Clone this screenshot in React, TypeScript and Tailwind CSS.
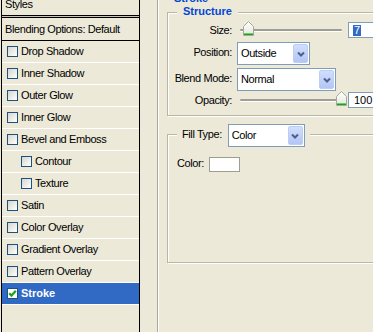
import React from "react";

function Check({ checked }: { checked?: boolean }) {
  return (
    <span
      className={
        checked
          ? "w-[11px] h-[11px] shrink-0 border border-[#1C5180] bg-white flex items-center justify-center"
          : "w-[11px] h-[11px] shrink-0 border border-[#1C5180] bg-linear-to-br from-[#D6D6CE] to-white"
      }
    >
      {checked && (
        <svg width="9" height="9" viewBox="0 0 9 9">
          <path d="M1.2 4.2 L3.5 6.6 L7.8 1.8" stroke="#21A121" strokeWidth="2.2" fill="none" />
        </svg>
      )}
    </span>
  );
}

function Thumb() {
  return (
    <svg width="11" height="15" viewBox="0 0 11 15">
      <defs>
        <linearGradient id="tg" x1="0" y1="0" x2="0" y2="1">
          <stop offset="0" stopColor="#FFFFFF" />
          <stop offset="1" stopColor="#E6E6DE" />
        </linearGradient>
      </defs>
      <path d="M0.5 5.5 L5.5 0.5 L10.5 5.5 V14.5 H0.5 Z" fill="url(#tg)" stroke="#A8A89C" />
      <path d="M1 12.5 H10" stroke="#5CD65C" />
      <path d="M1 13.5 H10" stroke="#21A121" />
    </svg>
  );
}

function Arrow() {
  return (
    <span className="w-[15px] h-[19px] shrink-0 rounded-[2px] border border-[#BCCDF6] bg-linear-to-b from-[#D2DEFD] to-[#B2C5F5] flex items-center justify-center">
      <svg width="8" height="6" viewBox="0 0 8 6">
        <path d="M1 1.5 L4 4.5 L7 1.5" stroke="#4D6185" strokeWidth="2" fill="none" />
      </svg>
    </span>
  );
}

function Select({ value, w }: { value: string; w: string }) {
  return (
    <div className={`${w} h-[23px] border border-[#7F9DB9] bg-white flex items-center pl-[3px] pr-[1px]`}>
      <span className="flex-1">{value}</span>
      <Arrow />
    </div>
  );
}

const items: { label: string; indent?: boolean; checked?: boolean }[] = [
  { label: "Drop Shadow" },
  { label: "Inner Shadow" },
  { label: "Outer Glow" },
  { label: "Inner Glow" },
  { label: "Bevel and Emboss" },
  { label: "Contour", indent: true },
  { label: "Texture", indent: true },
  { label: "Satin" },
  { label: "Color Overlay" },
  { label: "Gradient Overlay" },
  { label: "Pattern Overlay" },
  { label: "Stroke", checked: true },
];

export default function App() {
  return (
    <div className="w-[373px] h-[332px] overflow-hidden bg-[#ECE9D8] flex font-['Liberation_Sans',Arial,sans-serif] text-[11px] text-black tracking-[-0.4px]">
      {/* left list */}
      <div className="ml-[1px] w-[139px] h-full border-x border-black flex flex-col shrink-0">
        <div className="h-[16px] border-b border-black pl-[3px] leading-[9px]">Styles</div>
        <div className="h-[1px] bg-[#C9C5B5]" />
        <div className="border-t border-black flex flex-col">
          <div className="h-[23px] border-b border-black pl-[3px] flex items-center">Blending Options: Default</div>
          {items.map((it) => (
            <div
              key={it.label}
              className={
                it.checked
                  ? "h-[22px] border-b border-white flex items-center pl-[5px] bg-[#316AC5] text-white font-bold tracking-normal"
                  : it.indent
                  ? "h-[22px] border-b border-white flex items-center pl-[19px]"
                  : "h-[22px] border-b border-white flex items-center pl-[5px]"
              }
            >
              <Check checked={it.checked} />
              <span className="ml-[3px]">{it.label}</span>
            </div>
          ))}
        </div>
      </div>

      {/* right side */}
      <div className="flex-1 h-full">
        <div className="ml-[17px] h-full border-l border-[#ACA899] shadow-[inset_1px_0_0_#fff] relative pl-[9px] pt-[12px]">
          <div className="absolute top-[-8px] left-[14px] px-[2px] font-bold text-[#0046D5] tracking-normal leading-[13px]">
            Stroke
          </div>

          {/* Structure */}
          <div className="relative w-[260px] h-[104px] border border-[#B9B6A6] shadow-[inset_1px_1px_0_#fff,1px_1px_0_#fff] flex flex-col pt-[9px]">
            <div className="absolute top-[-8px] left-[9px] px-[6px] bg-[#ECE9D8] font-bold text-[#0046D5] tracking-normal leading-[13px]">
              Structure
            </div>

            <div className="flex items-center h-[16px]">
              <span className="w-[64px] text-right">Size:</span>
              <div className="ml-[8px] w-[102px] h-[16px] relative flex items-center">
                <div className="w-full h-[2px] bg-[#A09E93] shadow-[0_1px_0_#fff] rounded-full" />
                <div className="absolute left-[3px] top-[-1px]">
                  <Thumb />
                </div>
              </div>
              <div className="ml-[6px] w-[40px] h-[16px] border border-[#7F9DB9] bg-white flex items-center pl-[4px]">
                <span className="bg-[#316AC5] text-white leading-[11px] px-[1px]">7</span>
              </div>
            </div>

            <div className="flex items-center h-[23px] mt-[4px]">
              <span className="w-[64px] text-right mb-[3px]">Position:</span>
              <div className="ml-[5px]">
                <Select value="Outside" w="w-[73px]" />
              </div>
            </div>

            <div className="flex items-center h-[23px] mt-[3px]">
              <span className="w-[64px] text-right mb-[3px]">Blend Mode:</span>
              <div className="ml-[5px]">
                <Select value="Normal" w="w-[99px]" />
              </div>
            </div>

            <div className="flex items-center h-[16px] mt-[1px]">
              <span className="w-[64px] text-right">Opacity:</span>
              <div className="ml-[8px] w-[102px] h-[16px] relative flex items-center">
                <div className="w-full h-[2px] bg-[#A09E93] shadow-[0_1px_0_#fff] rounded-full" />
                <div className="absolute left-[96px] top-[-1px]">
                  <Thumb />
                </div>
              </div>
              <div className="ml-[6px] w-[40px] h-[16px] border border-[#7F9DB9] bg-white flex items-center pl-[5px] tracking-normal">
                100
              </div>
            </div>
          </div>

          {/* Fill Type */}
          <div className="relative mt-[18px] w-[260px] h-[129px] border border-[#B9B6A6] shadow-[inset_1px_1px_0_#fff,1px_1px_0_#fff] pt-[22px] pl-[9px]">
            <div className="absolute top-[-11px] left-[9px] px-[5px] bg-[#ECE9D8] flex items-center">
              <span className="mb-[3px]">Fill Type:</span>
              <div className="ml-[6px]">
                <Select value="Color" w="w-[77px]" />
              </div>
            </div>
            <div className="flex items-center h-[15px]">
              <span className="mb-[3px]">Color:</span>
              <div className="ml-[5px] w-[31px] h-[15px] border border-[#9D9D92] bg-white" />
            </div>
          </div>
        </div>
      </div>
    </div>
  );
}
